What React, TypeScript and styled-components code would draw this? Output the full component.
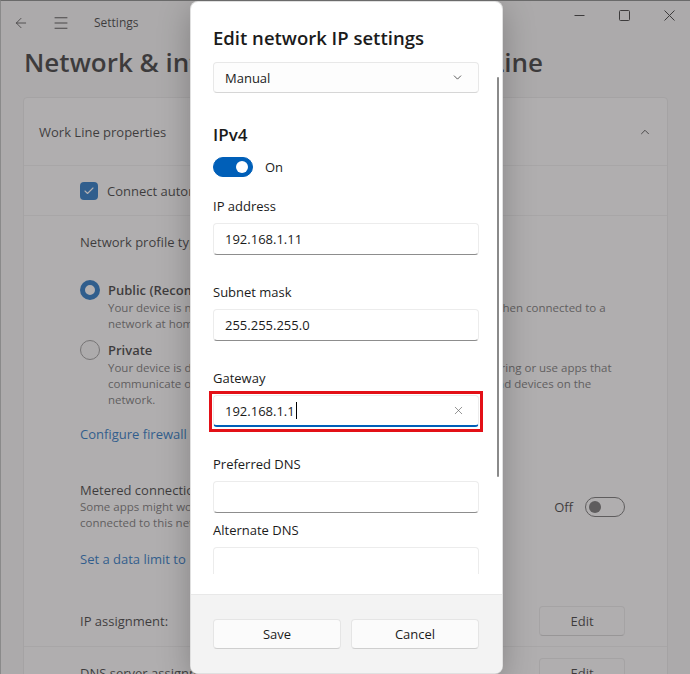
import React from "react";
import styled, { createGlobalStyle } from "styled-components";
import { ArrowLeft, Menu, ChevronUp, ChevronDown, ChevronRight, X, Check } from "lucide-react";

const GlobalStyle = createGlobalStyle`
  body {
    margin: 0;
    font-family: "Open Sans", "Noto Sans", sans-serif;
  }
  * {
    box-sizing: border-box;
  }
`;

const SettingsWindow = styled.div`
  position: relative;
  width: 690px;
  height: 674px;
  overflow: hidden;
  background: #f3f3f3;
  color: #1b1b1b;
  border-top: 1px solid #6a6a6a;
  border-left: 1px solid #8a8a8a;
`;

const TitleBar = styled.div`
  display: flex;
  align-items: flex-start;
  height: 43px;
`;

const NavButton = styled.div`
  width: 40px;
  height: 43px;
  display: flex;
  align-items: center;
  justify-content: center;
  color: #1b1b1b;
`;

const AppName = styled.div`
  align-self: center;
  margin-left: 13px;
  font-size: 12px;
`;

const WindowControls = styled.div`
  display: flex;
  margin-left: auto;
  margin-right: -2px;
`;

const ControlButton = styled.div`
  width: 45px;
  height: 29px;
  display: flex;
  align-items: center;
  justify-content: center;
`;

const PageTitle = styled.div`
  display: flex;
  align-items: center;
  gap: 13px;
  height: 36px;
  margin-left: 23px;
  font-size: 26px;
  font-weight: 600;
  white-space: nowrap;
`;

const PageBody = styled.div`
  padding: 17px 22px 0 22px;
`;

const Card = styled.div`
  background: #fbfbfb;
  border: 1px solid #e5e5e5;
  border-radius: 4px;
`;

const CardHeader = styled.div`
  height: 68px;
  display: flex;
  align-items: center;
  justify-content: space-between;
  padding: 0 15px 0 15px;
  font-size: 13px;
  border-bottom: 1px solid #ebebeb;
`;

const Row = styled.div<{ $height?: number; $divider?: boolean }>`
  display: flex;
  align-items: center;
  justify-content: space-between;
  min-height: ${(p) => p.$height ?? 50}px;
  padding: 0 42px 0 56px;
  font-size: 13px;
  border-bottom: ${(p) => (p.$divider ? "1px solid #ebebeb" : "none")};
`;

const Section = styled.div`
  padding: 17px 42px 0 56px;
  font-size: 13px;
`;

const CheckLabel = styled.label`
  display: flex;
  align-items: center;
  gap: 9px;
`;

const CheckBox = styled.span`
  width: 18px;
  height: 18px;
  border-radius: 4px;
  background: #005fb8;
  color: #fff;
  display: flex;
  align-items: center;
  justify-content: center;
`;

const SectionLabel = styled.div`
  line-height: 18px;
`;

const RadioOption = styled.div<{ $top: number }>`
  display: flex;
  gap: 8px;
  margin-top: ${(p) => p.$top}px;
`;

const Radio = styled.span<{ $checked?: boolean }>`
  flex: none;
  width: 20px;
  height: 20px;
  border-radius: 50%;
  background: ${(p) => (p.$checked ? "#fff" : "#f5f5f5")};
  border: ${(p) => (p.$checked ? "5px solid #005fb8" : "1px solid #8a8a8a")};
`;

const OptionTitle = styled.div`
  font-weight: 600;
  line-height: 20px;
`;

const Description = styled.div<{ $width?: number }>`
  max-width: ${(p) => p.$width ?? 512}px;
  font-size: 11.5px;
  line-height: 16px;
  color: #5f5f5f;
`;

const Link = styled.div<{ $top: number }>`
  margin-top: ${(p) => p.$top}px;
  line-height: 20px;
  color: #005fb8;
`;

const ItemTitle = styled.div`
  line-height: 18px;
`;

const SwitchGroup = styled.div`
  display: flex;
  align-items: center;
  gap: 12px;
`;

const Switch = styled.span<{ $on?: boolean }>`
  position: relative;
  display: block;
  width: 40px;
  height: 20px;
  border-radius: 10px;
  background: ${(p) => (p.$on ? "#005fb8" : "transparent")};
  border: 1px solid ${(p) => (p.$on ? "#005fb8" : "#5d5d5d")};
  &::after {
    content: "";
    position: absolute;
    top: 50%;
    left: ${(p) => (p.$on ? "22px" : "3px")};
    width: 12px;
    height: 12px;
    margin-top: -6px;
    border-radius: 50%;
    background: ${(p) => (p.$on ? "#fff" : "#5d5d5d")};
  }
`;

const EditButton = styled.div`
  width: 86px;
  height: 30px;
  display: flex;
  align-items: center;
  justify-content: center;
  font-size: 13px;
  background: #fbfbfb;
  border: 1px solid #e5e5e5;
  border-bottom-color: #cccccc;
  border-radius: 4px;
`;

const Smoke = styled.div`
  position: absolute;
  inset: 0;
  background: rgba(98, 94, 95, 0.49);
`;

const Dialog = styled.div`
  position: absolute;
  top: 0;
  left: 189px;
  width: 313px;
  height: 673px;
  display: flex;
  flex-direction: column;
  background: #ffffff;
  border: 1px solid rgba(0, 0, 0, 0.12);
  border-radius: 8px;
  overflow: hidden;
  box-shadow: 0 8px 32px rgba(0, 0, 0, 0.25);
  color: #1b1b1b;
`;

const DialogBody = styled.div`
  flex: 1;
  padding: 0 23px 0 22px;
`;

const DialogTitle = styled.div`
  margin-top: 23px;
  margin-bottom: 11px;
  font-size: 18.5px;
  font-weight: 600;
  line-height: 26px;
`;

const ScrollView = styled.div`
  height: 512px;
  margin: 0 -4px;
  padding: 0 4px;
  overflow: hidden;
  font-size: 13px;
`;

const Scrollbar = styled.div`
  position: absolute;
  top: 75px;
  right: 3px;
  width: 2px;
  height: 400px;
  border-radius: 1px;
  background: #8a8a8a;
`;

const Select = styled.div`
  height: 31px;
  display: flex;
  align-items: center;
  justify-content: space-between;
  padding: 0 14px 0 11px;
  background: #fdfdfd;
  border: 1px solid #e8e8e8;
  border-bottom-color: #d6d6d6;
  border-radius: 4px;
  color: #1b1b1b;
`;

const GroupTitle = styled.div`
  margin-top: 30px;
  font-size: 17px;
  font-weight: 600;
  line-height: 24px;
`;

const ToggleRow = styled.div`
  display: flex;
  align-items: center;
  gap: 12px;
  margin-top: 10px;
`;

const FieldLabel = styled.div<{ $top: number }>`
  margin-top: ${(p) => p.$top}px;
  margin-bottom: 8px;
  line-height: 18px;
`;

const TextField = styled.div<{ $focused?: boolean }>`
  height: 32px;
  display: flex;
  align-items: center;
  padding: 0 13px 0 11px;
  background: #fff;
  border: 1px solid #ececec;
  border-bottom: ${(p) => (p.$focused ? "2px solid #005fb8" : "1px solid #8d8d8d")};
  border-radius: 4px;
`;

const HighlightFrame = styled.div`
  margin: -4px -4px -5px;
  padding: 1px 1px 2px;
  border: 3px solid #e31017;
`;

const FieldValue = styled.span`
  flex: 1;
  display: flex;
  align-items: center;
`;

const Caret = styled.span`
  display: inline-block;
  width: 1px;
  height: 17px;
  margin-left: 1px;
  background: #000;
`;

const Footer = styled.div`
  height: 79px;
  display: grid;
  grid-template-columns: 1fr 1fr;
  gap: 10px;
  align-content: start;
  padding: 24px 23px 0 22px;
  background: #f3f3f3;
  border-top: 1px solid #e8e8e8;
`;

const FooterButton = styled.div`
  height: 30px;
  display: flex;
  align-items: center;
  justify-content: center;
  font-size: 13px;
  background: #fbfbfb;
  border: 1px solid #e5e5e5;
  border-bottom-color: #cfcfcf;
  border-radius: 4px;
`;

function Glyph({ kind }: { kind: "min" | "max" | "close" }) {
  return (
    <svg width="11" height="11" viewBox="0 0 11 11" fill="none" stroke="#1b1b1b" strokeWidth="1">
      {kind === "min" && <path d="M0.5 5.5h10" />}
      {kind === "max" && <rect x="0.5" y="0.5" width="10" height="10" rx="1" />}
      {kind === "close" && <path d="M0.5 0.5l10 10M10.5 0.5l-10 10" />}
    </svg>
  );
}

function App() {
  return (
    <>
      <GlobalStyle />
      <SettingsWindow>
        <TitleBar>
          <NavButton>
            <ArrowLeft size={16} strokeWidth={1.2} />
          </NavButton>
          <NavButton>
            <Menu size={18} strokeWidth={1.2} />
          </NavButton>
          <AppName>Settings</AppName>
          <WindowControls>
            <ControlButton>
              <Glyph kind="min" />
            </ControlButton>
            <ControlButton>
              <Glyph kind="max" />
            </ControlButton>
            <ControlButton>
              <Glyph kind="close" />
            </ControlButton>
          </WindowControls>
        </TitleBar>

        <PageTitle>
          <span>Network &amp; internet</span>
          <ChevronRight size={18} strokeWidth={1.5} />
          <span>Wi-Fi</span>
          <ChevronRight size={18} strokeWidth={1.5} />
          <span>Work Line</span>
        </PageTitle>

        <PageBody>
          <Card>
            <CardHeader>
              Work Line properties
              <ChevronUp size={14} strokeWidth={1.5} />
            </CardHeader>
            <Row $divider>
              <CheckLabel>
                <CheckBox>
                  <Check size={12} strokeWidth={2.2} />
                </CheckBox>
                Connect automatically when in range
              </CheckLabel>
            </Row>
            <Section>
              <SectionLabel>Network profile type</SectionLabel>
              <RadioOption $top={29}>
                <Radio $checked />
                <div>
                  <OptionTitle>Public (Recommended)</OptionTitle>
                  <Description>
                    Your device is not discoverable on the network. Use this in most cases—when connected to a
                    network at home, work, or in a public place.
                  </Description>
                </div>
              </RadioOption>
              <RadioOption $top={8}>
                <Radio />
                <div>
                  <OptionTitle>Private</OptionTitle>
                  <Description>
                    Your device is discoverable on the network. Select this if you need file sharing or use apps that
                    communicate over this network. You should know and trust the people and devices on the
                    network.
                  </Description>
                </div>
              </RadioOption>
              <Link $top={16}>Configure firewall and security settings</Link>
            </Section>
            <Row $height={50} style={{ marginTop: 37, alignItems: "flex-start" }}>
              <div>
                <ItemTitle>Metered connection</ItemTitle>
                <Description $width={380}>
                  Some apps might work differently to reduce data usage when you're connected to this network
                </Description>
              </div>
              <SwitchGroup style={{ marginTop: 16 }}>
                Off
                <Switch />
              </SwitchGroup>
            </Row>
            <Section style={{ paddingTop: 0 }}>
              <Link $top={18}>Set a data limit to help control data usage on this network</Link>
            </Section>
            <Row $height={52} $divider style={{ marginTop: 26 }}>
              IP assignment:
              <EditButton>Edit</EditButton>
            </Row>
            <Row $height={52}>
              DNS server assignment:
              <EditButton>Edit</EditButton>
            </Row>
          </Card>
        </PageBody>

        <Smoke />

        <Dialog>
          <DialogBody>
            <DialogTitle>Edit network IP settings</DialogTitle>
            <ScrollView>
              <Select>
                Manual
                <ChevronDown size={13} strokeWidth={1.3} />
              </Select>
              <GroupTitle>IPv4</GroupTitle>
              <ToggleRow>
                <Switch $on />
                On
              </ToggleRow>
              <FieldLabel $top={20}>IP address</FieldLabel>
              <TextField>192.168.1.11</TextField>
              <FieldLabel $top={28}>Subnet mask</FieldLabel>
              <TextField>255.255.255.0</TextField>
              <FieldLabel $top={28}>Gateway</FieldLabel>
              <HighlightFrame>
                <TextField $focused>
                  <FieldValue>
                    192.168.1.1
                    <Caret />
                  </FieldValue>
                  <X size={13} strokeWidth={1.2} color="#5f5f5f" />
                </TextField>
              </HighlightFrame>
              <FieldLabel $top={28}>Preferred DNS</FieldLabel>
              <TextField />
              <FieldLabel $top={8}>Alternate DNS</FieldLabel>
              <TextField />
            </ScrollView>
          </DialogBody>
          <Scrollbar />
          <Footer>
            <FooterButton>Save</FooterButton>
            <FooterButton>Cancel</FooterButton>
          </Footer>
        </Dialog>
      </SettingsWindow>
    </>
  );
}

export default App;
